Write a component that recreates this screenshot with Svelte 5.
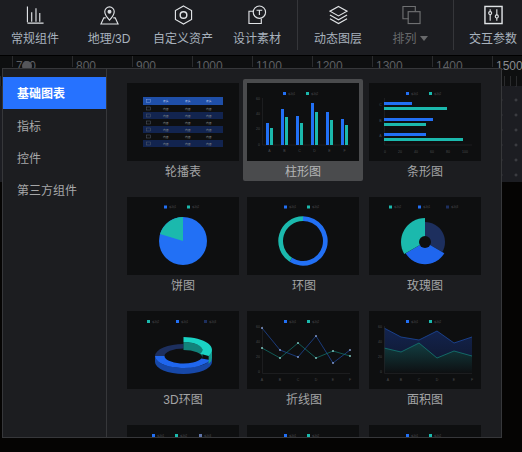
<script>
  const blue = '#2270f5';
  const teal = '#1bb9ad';
  const navy = '#1d2f5e';
  const slate = '#5f74a8';

  const rulerMarks = [700, 800, 900, 1000, 1100, 1200, 1300, 1400, 1500];
  const menu = ['基础图表', '指标', '控件', '第三方组件'];

  const charts = [
    { id: 'table', label: '轮播表' },
    { id: 'bar', label: '柱形图', active: true },
    { id: 'hbar', label: '条形图' },
    { id: 'pie', label: '饼图' },
    { id: 'ring', label: '环图' },
    { id: 'rose', label: '玫瑰图' },
    { id: 'ring3d', label: '3D环图' },
    { id: 'line', label: '折线图' },
    { id: 'area', label: '面积图' },
    { id: 'more1', label: '' },
    { id: 'more2', label: '' },
    { id: 'more3', label: '' }
  ];

  const barData = [
    { x: 19, a: 40, b: 45, t: 'A' },
    { x: 34, a: 26, b: 34, t: 'B' },
    { x: 49, a: 33, b: 40, t: 'C' },
    { x: 64, a: 20, b: 29, t: 'D' },
    { x: 79, a: 29, b: 37, t: 'E' },
    { x: 94, a: 36, b: 42, t: 'F' }
  ];
  const hbarData = [
    { y: 19, a: 43, b: 78, t: 'C' },
    { y: 35, a: 64, b: 57, t: 'B' },
    { y: 50, a: 57, b: 94, t: 'A' }
  ];
  const xs = ['A', 'B', 'C', 'D', 'E', 'F'];
  const lineX = [15, 33, 51, 69, 86, 103];
  const lineBlue = [17, 39, 46, 25, 52, 39];
  const lineTeal = [37, 47, 32, 47, 40, 45];
  const areaX = [15, 32, 50, 68, 85, 103];
  const areaBlue = [17, 26, 29, 20, 32, 26];
  const areaTeal = [37, 41, 32, 47, 40, 45];

  const rows = [0, 1, 2, 3, 4, 5];
  const cols = [36, 58, 79];

  const pts = (x, y) => x.map((v, i) => `${v},${y[i]}`).join(' ');
  const area = (x, y) => `${x[0]},62 ${pts(x, y)} ${x[x.length - 1]},62`;

  // angle in degrees, clockwise from top
  function pt(cx, cy, rx, ry, a) {
    const r = (a * Math.PI) / 180;
    return `${(cx + rx * Math.sin(r)).toFixed(2)} ${(cy - ry * Math.cos(r)).toFixed(2)}`;
  }
  function wedge(cx, cy, r, a0, a1) {
    const big = a1 - a0 > 180 ? 1 : 0;
    return `M${cx} ${cy}L${pt(cx, cy, r, r, a0)}A${r} ${r} 0 ${big} 1 ${pt(cx, cy, r, r, a1)}Z`;
  }
  function slice(cx, cy, rx, ry, irx, iry, a0, a1) {
    const big = a1 - a0 > 180 ? 1 : 0;
    return `M${pt(cx, cy, rx, ry, a0)}A${rx} ${ry} 0 ${big} 1 ${pt(cx, cy, rx, ry, a1)}L${pt(cx, cy, irx, iry, a1)}A${irx} ${iry} 0 ${big} 0 ${pt(cx, cy, irx, iry, a0)}Z`;
  }
  // vertical wall under an elliptical arc
  function wall(cx, cy, rx, ry, h, a0, a1) {
    const big = a1 - a0 > 180 ? 1 : 0;
    return `M${pt(cx, cy, rx, ry, a0)}A${rx} ${ry} 0 ${big} 1 ${pt(cx, cy, rx, ry, a1)}L${pt(cx, cy + h, rx, ry, a1)}A${rx} ${ry} 0 ${big} 0 ${pt(cx, cy + h, rx, ry, a0)}Z`;
  }
</script>

{#snippet legend(items, y = 10)}
  {#each items as item}
    <rect x={item.x} y={y - 1.5} width="3" height="3" fill={item.c} />
    <text class="tiny" x={item.x + 5} y={y + 1}>{item.t}</text>
  {/each}
{/snippet}

{#snippet chart(id)}
  <svg class="thumb" viewBox="0 0 112 78" aria-hidden="true">
    {#if id === 'table'}
      <rect x="16" y="14" width="80" height="8" fill="#1f4fa8" />
      {#each rows as r}
        {#if r % 2 === 1}
          <rect x="16" y={22 + r * 7} width="80" height="7" fill="#12244f" />
        {/if}
        <rect x="19.5" y={24 + r * 7} width="4" height="3" fill="none" stroke="#555c6a" stroke-width="0.5" />
        {#each cols as c}
          <text class="cell" x={c} y={26.8 + r * 7}>内容</text>
        {/each}
      {/each}
      <rect x="19.5" y="16.5" width="4" height="3" fill="none" stroke="#7d9bdc" stroke-width="0.5" />
      {#each cols as c}
        <text class="cell head" x={c} y="19.2">表头</text>
      {/each}
    {:else if id === 'bar'}
      {@render legend([{ x: 36, c: blue, t: '系列1' }, { x: 59, c: teal, t: '系列2' }], 10.5)}
      <path class="axis" d="M15.5 15V62H103" />
      {#each barData as d}
        <rect x={d.x} y={d.a} width="3" height={62 - d.a} fill={blue} />
        <rect x={d.x + 4} y={d.b} width="3" height={62 - d.b} fill={teal} />
        <text class="tick mid" x={d.x + 3.5} y="69">{d.t}</text>
      {/each}
      <text class="tick end" x="13" y="16.5">60</text>
      <text class="tick end" x="13" y="32">40</text>
      <text class="tick end" x="13" y="47">20</text>
      <text class="tick end" x="13" y="62.5">0</text>
    {:else if id === 'hbar'}
      {@render legend([{ x: 37, c: blue, t: '系列1' }, { x: 60, c: teal, t: '系列2' }], 10.5)}
      <path class="axis" d="M15.5 15V62H103" />
      {#each hbarData as d}
        <rect x="15" y={d.y} width={d.a - 15} height="3" fill={blue} />
        <rect x="15" y={d.y + 5} width={d.b - 15} height="3" fill={teal} />
        <text class="tick mid" x="11.5" y={d.y + 4}>{d.t}</text>
      {/each}
      <text class="tick mid" x="16" y="69.5">0</text>
      <text class="tick mid" x="31" y="69.5">20</text>
      <text class="tick mid" x="47" y="69.5">40</text>
      <text class="tick mid" x="63" y="69.5">60</text>
      <text class="tick mid" x="79" y="69.5">80</text>
      <text class="tick mid" x="96" y="69.5">100</text>
    {:else if id === 'pie'}
      {@render legend([{ x: 37, c: blue, t: '系列1' }, { x: 60, c: teal, t: '系列2' }])}
      <circle cx="56" cy="44" r="24" fill={blue} />
      <path d={wedge(56, 44, 24, 287, 360)} fill={teal} />
    {:else if id === 'ring'}
      {@render legend([{ x: 37, c: blue, t: '系列1' }, { x: 60, c: teal, t: '系列2' }])}
      <path d={slice(56, 44, 24.7, 24.7, 20, 20, 0, 213)} fill={blue} />
      <path d={slice(56, 44, 24.7, 24.7, 20, 20, 213, 360)} fill={teal} />
    {:else if id === 'rose'}
      {@render legend([{ x: 20, c: teal, t: '系列2' }, { x: 49, c: blue, t: '系列1' }, { x: 77, c: navy, t: '系列3' }])}
      <path d={wedge(56, 45, 20, 0, 120)} fill={navy} />
      <path d={wedge(56, 45, 22.3, 120, 240)} fill="#1f66ee" />
      <path d={wedge(56, 45, 24, 240, 360)} fill={teal} />
      <circle cx="56" cy="45" r="6" fill="#0e0f10" />
    {:else if id === 'ring3d'}
      {@render legend([{ x: 20, c: teal, t: '系列2' }, { x: 49, c: blue, t: '系列1' }, { x: 77, c: navy, t: '系列3' }], 10.5)}
      <path d={wall(56.5, 45, 28.5, 12, 6, 90, 270)} fill="#1748a8" />
      <path d={slice(56.5, 45, 28.5, 12, 19, 7.5, 270, 360)} fill={navy} />
      <path d={slice(56.5, 45, 28.5, 12, 19, 7.5, 110, 270)} fill="#1f66ee" />
      <path d={wall(56.5, 39, 28.5, 13, 8, 90, 118)} fill="#169c93" />
      <path d={wall(56.5, 39, 19, 8, 8, 0, 90)} fill="#12827a" />
      <path d={slice(56.5, 39, 28.5, 13, 19, 8, 0, 118)} fill="#1ad3c4" />
    {:else if id === 'line'}
      {@render legend([{ x: 37, c: blue, t: '系列1' }, { x: 60, c: teal, t: '系列2' }], 10.5)}
      <path class="axis" d="M15.5 15V62.5H103" />
      <polyline points={pts(lineX, lineBlue)} fill="none" stroke="#1f4ea8" stroke-width="0.7" />
      <polyline points={pts(lineX, lineTeal)} fill="none" stroke="#137a72" stroke-width="0.7" />
      {#each lineX as x, i}
        <rect x={x - 0.8} y={lineBlue[i] - 0.8} width="1.6" height="1.6" fill="#8fa8e0" />
        <rect x={x - 0.8} y={lineTeal[i] - 0.8} width="1.6" height="1.6" fill="#8fdcd4" />
        <text class="tick mid" {x} y="70">{xs[i]}</text>
      {/each}
      <text class="tick end" x="13" y="17">60</text>
      <text class="tick end" x="13" y="32">40</text>
      <text class="tick end" x="13" y="47">20</text>
      <text class="tick end" x="13" y="62">0</text>
    {:else if id === 'area'}
      <defs>
        <linearGradient id="fade-blue" x1="0" y1="0" x2="0" y2="1">
          <stop offset="0" stop-color="#13244f" />
          <stop offset="1" stop-color="#0f1528" />
        </linearGradient>
        <linearGradient id="fade-teal" x1="0" y1="0" x2="0" y2="1">
          <stop offset="0" stop-color="#123e42" />
          <stop offset="1" stop-color="#0e1012" />
        </linearGradient>
      </defs>
      {@render legend([{ x: 37, c: blue, t: '系列1' }, { x: 60, c: teal, t: '系列2' }], 10.5)}
      <polygon points={area(areaX, areaBlue)} fill="url(#fade-blue)" />
      <polygon points={area(areaX, areaTeal)} fill="url(#fade-teal)" />
      <polyline points={pts(areaX, areaBlue)} fill="none" stroke="#1c49a0" stroke-width="0.8" />
      <polyline points={pts(areaX, areaTeal)} fill="none" stroke="#137a72" stroke-width="0.8" />
      <path class="axis" d="M15.5 15V62.5H103" />
      {#each areaX as x, i}
        <text class="tick mid" x={i === 0 ? 19 : x} y="70">{xs[i]}</text>
      {/each}
      <text class="tick end" x="13" y="17">60</text>
      <text class="tick end" x="13" y="32">40</text>
      <text class="tick end" x="13" y="47">20</text>
      <text class="tick end" x="13" y="62">0</text>
    {:else if id === 'more1'}
      {@render legend([{ x: 25, c: blue, t: '系列1' }, { x: 48, c: teal, t: '系列2' }, { x: 72, c: slate, t: '系列3' }], 10.5)}
    {:else}
      {@render legend([{ x: 37, c: blue, t: '系列1' }, { x: 60, c: teal, t: '系列2' }], 10.5)}
    {/if}
  </svg>
{/snippet}

<div class="page">
  <header class="toolbar">
    <div class="tool t-chart">
      <svg viewBox="0 0 20 20" class="ico"><path d="M1.5 1v16.5M1.5 18.5h17M6 7v10M10.500 3v14M14.500 8v9" /></svg>
      <span>常规组件</span>
    </div>
    <div class="tool t-geo">
      <svg viewBox="0 0 20 20" class="ico"><path d="M6 13H4L1 19.500h18L16 13h-2" /><path d="M10 15.500C7 12 5 9.500 5 6.500a5 5 0 0 1 10 0c0 3-2 5.500-5 9Z" /><circle cx="10" cy="6.500" r="1.500" fill="currentColor" /></svg>
      <span>地理/3D</span>
    </div>
    <div class="tool t-custom">
      <svg viewBox="0 0 20 20" class="ico"><path d="M10 .5 18.500 5.250v9.500L10 19.500 1.500 14.750v-9.500Z" /><circle cx="10" cy="10" r="3.500" stroke-width="1.500" /></svg>
      <span>自定义资产</span>
    </div>
    <div class="tool t-design">
      <svg viewBox="0 0 20 20" class="ico"><path d="M6 6H1v13h13v-5" /><circle cx="12" cy="7" r="6.500" /><path d="M9 5h6M12 5v5" /></svg>
      <span>设计素材</span>
    </div>
    <div class="sep s-one"></div>
    <div class="tool t-layers">
      <svg viewBox="0 0 20 20" class="ico"><path d="M10 1 19 6l-9 5-9-5Z" /><path d="m1 10 9 5 9-5M1 14l9 5 9-5" /></svg>
      <span>动态图层</span>
    </div>
    <div class="tool t-sort off">
      <svg viewBox="0 0 20 20" class="ico wide"><path d="M7 14H1V1h13v5" /><rect x="6.500" y="6.500" width="12.500" height="12.500" /></svg>
      <span>排列<i class="caret"></i></span>
    </div>
    <div class="sep s-two"></div>
    <div class="tool t-params">
      <svg viewBox="0 0 20 20" class="ico"><rect x="1" y="1" width="18" height="18" stroke-width="1.500" /><path d="M6.500 4v12M13.500 4v12" /><circle cx="6.500" cy="8" r="1.600" fill="#1c1d21" /><circle cx="13.500" cy="11.500" r="1.600" fill="#1c1d21" /></svg>
      <span>交互参数</span>
    </div>
  </header>

  <div class="ruler">
    <span class="ruler-knob"></span>
    {#each rulerMarks as mark}
      <span class="mark">{mark}</span>
    {/each}
  </div>
  <div class="canvas"></div>

  <section class="panel">
    <nav class="menu">
      {#each menu as item, i}
        <div class="menu-item" class:active={i === 0}>{item}</div>
      {/each}
    </nav>
    <div class="grid">
      {#each charts as c}
        <div class="card" class:active={c.active}>
          {@render chart(c.id)}
          <div class="label">{c.label}</div>
        </div>
      {/each}
    </div>
  </section>
</div>

<style>
  :global(body) {
    background: #050403;
    overflow: hidden;
  }

  .page {
    position: relative;
    width: 522px;
    height: 452px;
    overflow: hidden;
    font-family: "Liberation Sans", "Noto Sans CJK SC", sans-serif;
  }

  .toolbar {
    display: flex;
    height: 56px;
    padding-left: 11px;
    box-sizing: border-box;
    background: #1c1d21;
    border-bottom: 1px solid #000;
  }

  .tool {
    display: flex;
    flex: 0 0 48px;
    min-width: 0;
    flex-direction: column;
    align-items: center;
    padding-top: 5px;
    color: #a8b2bd;
    font-size: 12px;
    line-height: 16px;
    white-space: nowrap;
  }

  .tool span {
    margin-top: 6px;
  }

  .t-geo { margin-left: 26px; }
  .t-custom { margin-left: 26px; }
  .t-design { margin-left: 26px; }
  .t-layers { margin-left: 16px; }
  .t-sort { margin-left: 24px; }

  .off {
    color: #68696b;
  }

  .ico {
    width: 19px;
    height: 20px;
    fill: none;
    stroke: #e0e3e6;
    stroke-width: 1.2;
    color: #e0e3e6;
    flex-shrink: 0;
  }

  .off .ico {
    stroke: #6f7072;
    margin-left: 3px;
  }

  .caret {
    display: inline-block;
    margin-left: 3px;
    border: 4px solid transparent;
    border-top: 5px solid #68696b;
    border-bottom: 0;
    vertical-align: 2px;
  }

  .sep {
    flex: 0 0 1px;
    height: 50px;
    background: #35363a;
  }

  .s-one { margin-left: 16px; }
  .s-two { margin-left: 19px; margin-right: 15px; }

  .ruler {
    position: relative;
    display: flex;
    height: 30px;
    padding-left: 12px;
    background-color: #0e0f10;
    background-image: repeating-linear-gradient(90deg, #2a2b2d 0 1px, transparent 1px 6px);
    background-size: 100% 10px;
    background-position: 0 100%;
    background-repeat: no-repeat;
    color: #5d5f62;
    font-size: 12px;
    line-height: 20px;
  }

  .mark {
    flex: 0 0 60px;
    box-sizing: border-box;
    height: 11px;
    padding-left: 3px;
    border-left: 1px solid #2a2b2d;
  }

  .mark:last-child {
    color: #8a8c8f;
  }

  .ruler-knob {
    position: absolute;
    left: 22px;
    top: 5px;
    width: 10px;
    height: 10px;
    border-radius: 50%;
    background: #55565a;
  }

  .canvas {
    height: 96px;
    background-color: #1c1d22;
    background-image: radial-gradient(circle, #45464b 1px, transparent 1.2px);
    background-size: 15px 15px;
    background-position: -1.500px 6.500px;
  }

  .panel {
    position: absolute;
    left: 2px;
    top: 68px;
    width: 500px;
    height: 370px;
    box-sizing: border-box;
    display: flex;
    overflow: hidden;
    background: #1c1d20;
    border: 1px solid #36373a;
  }

  .menu {
    flex: 0 0 104px;
    box-sizing: border-box;
    padding-top: 8px;
    border-right: 1px solid #36373a;
  }

  .menu-item {
    height: 32px;
    padding-left: 14px;
    color: #a6a7a8;
    font-size: 12px;
    line-height: 34px;
  }

  .menu-item.active {
    margin-bottom: 1px;
    background: #2672ff;
    color: #fff;
    font-weight: 700;
  }

  .grid {
    display: grid;
    grid-template-columns: 120px 122px 120px;
    grid-auto-rows: 102px;
    row-gap: 12px;
    padding: 10px 0 0 16px;
  }

  .card {
    box-sizing: border-box;
    padding: 4px 4px 0;
    border-radius: 2px;
  }

  .card.active {
    margin-right: 2px;
    background: #4a4b4d;
  }

  .thumb {
    display: block;
    width: 112px;
    height: 78px;
    background: #0e0f10;
  }

  .label {
    margin-top: 2px;
    height: 18px;
    color: #a3a4a5;
    font-size: 12px;
    line-height: 18px;
    text-align: center;
  }

  .card.active .label {
    color: #b4b5b6;
  }

  .tiny {
    fill: #505155;
    font-size: 2.800px;
  }

  .cell {
    fill: #8a8c90;
    font-size: 2.800px;
  }

  .cell.head {
    fill: #b8c6e6;
  }

  .tick {
    fill: #4a4b4e;
    font-size: 3.500px;
  }

  .mid { text-anchor: middle; }
  .end { text-anchor: end; }

  .axis {
    fill: none;
    stroke: #232426;
    stroke-width: 0.700;
  }
</style>
